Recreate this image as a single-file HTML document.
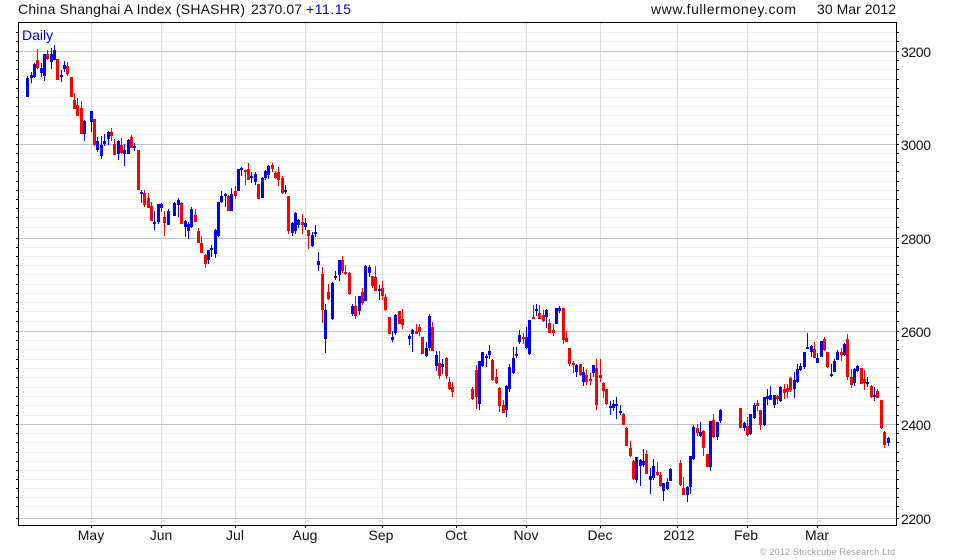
<!DOCTYPE html>
<html><head><meta charset="utf-8"><title>China Shanghai A Index</title>
<style>
html,body{margin:0;padding:0;background:#fff;width:980px;height:560px;overflow:hidden}
svg{display:block}
text{font-family:"Liberation Sans",Arial,sans-serif;font-size:14px;fill:#111}
</style></head><body>
<svg width="980" height="560" viewBox="0 0 980 560" xmlns="http://www.w3.org/2000/svg">
<rect width="980" height="560" fill="#fff"/>
<g shape-rendering="crispEdges" fill="none">
<path stroke="#f0f0f0" stroke-width="1" d="M19 32.5H896M19 41.5H896M19 60.5H896M19 69.5H896M19 79.5H896M19 88.5H896M19 97.5H896M19 106.5H896M19 115.5H896M19 125.5H896M19 134.5H896M19 153.5H896M19 162.5H896M19 171.5H896M19 181.5H896M19 190.5H896M19 199.5H896M19 208.5H896M19 217.5H896M19 227.5H896M19 247.5H896M19 256.5H896M19 265.5H896M19 274.5H896M19 284.5H896M19 293.5H896M19 302.5H896M19 311.5H896M19 321.5H896M19 340.5H896M19 349.5H896M19 359.5H896M19 368.5H896M19 377.5H896M19 387.5H896M19 396.5H896M19 405.5H896M19 415.5H896M19 433.5H896M19 442.5H896M19 452.5H896M19 461.5H896M19 470.5H896M19 479.5H896M19 488.5H896M19 497.5H896M19 506.5H896"/>
<path stroke="#dcdcdc" stroke-width="1" d="M91.5 23V525M161.5 23V525M235.5 23V525M305.5 23V525M382.5 23V525M456.5 23V525M526.5 23V525M600.5 23V525M677.5 23V525M747.5 23V525M817.5 23V525"/>
<path stroke="#bfbfbf" stroke-width="1" d="M19 51.5H896M19 144.5H896M19 238.5H896M19 331.5H896M19 424.5H896M19 518.5H896"/>
<path stroke="#000" stroke-width="1" d="M18.5 22V526M18 22.5H897M896.5 22V526M18 525.5H897"/>
<path stroke="#000" stroke-width="1" d="M16 32.5H18M16 41.5H18M16 51.5H18M16 60.5H18M16 69.5H18M16 79.5H18M16 88.5H18M16 97.5H18M16 106.5H18M16 115.5H18M16 125.5H18M16 134.5H18M16 144.5H18M16 153.5H18M16 162.5H18M16 171.5H18M16 181.5H18M16 190.5H18M16 199.5H18M16 208.5H18M16 217.5H18M16 227.5H18M16 238.5H18M16 247.5H18M16 256.5H18M16 265.5H18M16 274.5H18M16 284.5H18M16 293.5H18M16 302.5H18M16 311.5H18M16 321.5H18M16 331.5H18M16 340.5H18M16 349.5H18M16 359.5H18M16 368.5H18M16 377.5H18M16 387.5H18M16 396.5H18M16 405.5H18M16 415.5H18M16 424.5H18M16 433.5H18M16 442.5H18M16 452.5H18M16 461.5H18M16 470.5H18M16 479.5H18M16 488.5H18M16 497.5H18M16 506.5H18M16 518.5H18"/>
<path stroke="#000" stroke-width="1" d="M897 32.5H899M897 41.5H899M897 51.5H899M897 60.5H899M897 69.5H899M897 79.5H899M897 88.5H899M897 97.5H899M897 106.5H899M897 115.5H899M897 125.5H899M897 134.5H899M897 144.5H899M897 153.5H899M897 162.5H899M897 171.5H899M897 181.5H899M897 190.5H899M897 199.5H899M897 208.5H899M897 217.5H899M897 227.5H899M897 238.5H899M897 247.5H899M897 256.5H899M897 265.5H899M897 274.5H899M897 284.5H899M897 293.5H899M897 302.5H899M897 311.5H899M897 321.5H899M897 331.5H899M897 340.5H899M897 349.5H899M897 359.5H899M897 368.5H899M897 377.5H899M897 387.5H899M897 396.5H899M897 405.5H899M897 415.5H899M897 424.5H899M897 433.5H899M897 442.5H899M897 452.5H899M897 461.5H899M897 470.5H899M897 479.5H899M897 488.5H899M897 497.5H899M897 506.5H899M897 518.5H899"/>
<path stroke="#000" stroke-width="1" d="M91.5 526V528M161.5 526V528M235.5 526V528M305.5 526V528M382.5 526V528M456.5 526V528M526.5 526V528M600.5 526V528M677.5 526V528M747.5 526V528M817.5 526V528"/>
<!-- blue wicks -->
<path stroke="#0000ff" stroke-width="1" d="M27.5 76V97M31.5 72V83M34.5 63V78M41.5 63V77M44.5 54V81M51.5 48V69M54.5 45V60M61.5 70V82M64.5 61V72M84.5 120V141M91.5 111V132M97.5 137V152M101.5 136V159M104.5 134V146M108.5 131V145M118.5 140V160M124.5 144V166M128.5 139V154M134.5 143V151M141.5 190V203M154.5 211V230M158.5 204V224M161.5 203V212M168.5 209V225M174.5 202V216M178.5 198V217M185.5 220V237M188.5 222V239M191.5 207V228M208.5 250V264M211.5 245V257M215.5 229V258M218.5 202V237M221.5 191V203M225.5 193V207M231.5 188V211M238.5 169V191M241.5 167V176M251.5 172V183M255.5 172V185M262.5 177V198M265.5 170V180M268.5 165V179M285.5 185V194M292.5 222V236M295.5 212V234M298.5 219V228M305.5 218V230M312.5 232V247M315.5 225V237M318.5 252V271M325.5 304V353M332.5 282V320M335.5 271V280M339.5 260V281M352.5 304V316M359.5 296V315M365.5 265V301M369.5 265V277M379.5 285V300M392.5 331V342M395.5 314V335M409.5 334V345M412.5 329V352M426.5 342V357M429.5 314V351M436.5 351V371M442.5 359V374M479.5 361V410M482.5 352V367M486.5 354V367M489.5 345V359M506.5 385V417M509.5 364V392M513.5 347V374M516.5 347V358M519.5 330V344M526.5 327V349M529.5 320V355M536.5 304V316M546.5 309V328M556.5 308V324M559.5 306V313M576.5 364V377M583.5 367V386M593.5 365V377M610.5 401V415M613.5 400V411M616.5 397V419M620.5 405V415M636.5 457V483M640.5 459V486M643.5 449V467M650.5 468V494M653.5 459V480M663.5 483V501M667.5 478V490M670.5 468V481M687.5 486V502M690.5 456V494M693.5 425V460M700.5 422V437M710.5 421V471M717.5 422V440M720.5 409V423M744.5 422V431M750.5 414V435M754.5 403V419M764.5 397V426M767.5 389V405M770.5 386V400M774.5 395V408M780.5 386V402M794.5 372V398M797.5 364V383M800.5 363V371M804.5 352V369M807.5 333V349M811.5 345V357M817.5 353V363M821.5 341V357M831.5 364V377M834.5 359V372M837.5 350V360M844.5 343V356M854.5 368V386M857.5 365V372M867.5 377V387M874.5 387V401M888.5 437V446"/>
<!-- blue bodies -->
<path stroke="#0000ff" stroke-width="3" d="M27.5 78V97M31.5 75V78M34.5 64V77M41.5 68V73M44.5 54V76M51.5 54V62M54.5 50V60M61.5 75V77M64.5 65V69M84.5 121V134M91.5 111V122M97.5 141V150M101.5 145V156M104.5 141V144M108.5 132V139M118.5 141V154M124.5 150V154M128.5 140V154M134.5 146V148M141.5 192V194M154.5 222V224M158.5 204V222M161.5 204V208M168.5 211V225M174.5 203V216M178.5 200V205M185.5 221V227M188.5 224V231M191.5 209V227M208.5 250V260M211.5 248V250M215.5 230V254M218.5 202V236M221.5 196V202M225.5 194V196M231.5 194V211M238.5 169V191M241.5 168V170M251.5 176V178M255.5 174V182M262.5 178V198M265.5 171V178M268.5 166V175M285.5 190V192M292.5 223V233M295.5 213V231M298.5 220V225M305.5 223V227M312.5 235V246M315.5 232V234M318.5 261V265M325.5 310V339M332.5 283V319M335.5 276V278M339.5 260V275M352.5 306V314M359.5 296V311M365.5 266V301M369.5 267V273M379.5 289V291M392.5 337V340M395.5 315V333M409.5 336V339M412.5 330V334M426.5 348V356M429.5 316V348M436.5 355V366M442.5 364V367M479.5 361V404M482.5 352V366M486.5 356V358M489.5 351V355M506.5 386V410M509.5 367V389M513.5 358V373M516.5 354V356M519.5 335V342M526.5 337V348M529.5 320V354M536.5 309V311M546.5 310V317M556.5 308V324M559.5 308V311M576.5 365V372M583.5 372V382M593.5 365V373M610.5 406V408M613.5 404V408M616.5 404V406M620.5 411V413M636.5 457V480M640.5 460V466M643.5 461V465M650.5 476V480M653.5 466V478M663.5 483V491M667.5 482V489M670.5 469V481M687.5 487V495M690.5 456V487M693.5 427V459M700.5 432V436M710.5 421V467M717.5 422V437M720.5 410V421M744.5 423V428M750.5 414V434M754.5 405V418M764.5 397V425M767.5 396V399M770.5 395V400M774.5 395V405M780.5 387V401M794.5 380V389M797.5 369V382M800.5 366V370M804.5 352V367M807.5 347V349M811.5 346V352M817.5 358V363M821.5 341V357M831.5 374V376M834.5 361V372M837.5 352V360M844.5 344V355M854.5 369V383M857.5 366V371M867.5 382V384M874.5 395V397M888.5 438V443"/>
<!-- red wicks -->
<path stroke="#ff0000" stroke-width="1" d="M37.5 49V69M47.5 50V60M57.5 59V80M67.5 62V76M71.5 77V97M74.5 93V109M77.5 98V116M81.5 101V134M94.5 119V146M111.5 128V141M114.5 139V155M121.5 138V154M131.5 135V148M138.5 150V190M144.5 190V207M148.5 193V208M151.5 202V221M164.5 211V236M181.5 202V224M195.5 209V222M198.5 228V243M201.5 236V253M205.5 254V268M228.5 195V211M235.5 186V199M245.5 170V185M248.5 163V180M258.5 184V199M272.5 163V172M275.5 171V179M278.5 167V186M282.5 176V194M288.5 196V234M302.5 214V234M308.5 230V249M322.5 267V323M328.5 284V300M342.5 256V273M345.5 265V275M349.5 272V295M355.5 296V319M362.5 288V305M372.5 276V288M375.5 266V291M382.5 281V300M385.5 294V311M389.5 317V334M399.5 311V324M402.5 309V329M416.5 324V334M419.5 324V336M422.5 337V354M432.5 322V351M439.5 351V379M446.5 357V379M449.5 377V390M452.5 382V397M472.5 387V400M476.5 365V409M492.5 359V381M496.5 369V384M499.5 387V412M503.5 400V413M523.5 333V344M533.5 305V319M539.5 305V319M543.5 310V322M549.5 319V333M553.5 324V336M563.5 308V344M566.5 331V342M569.5 348V366M573.5 361V373M580.5 364V376M586.5 369V385M590.5 373V385M596.5 359V410M600.5 359V382M603.5 382V398M606.5 389V405M623.5 413V425M626.5 427V446M630.5 441V457M633.5 460V480M646.5 450V474M657.5 462V476M660.5 472V487M680.5 460V486M683.5 477V495M697.5 424V436M703.5 430V456M707.5 454V467M713.5 414V438M740.5 408V428M747.5 417V437M757.5 400V411M760.5 410V430M777.5 395V404M784.5 384V399M787.5 384V398M790.5 377V392M814.5 342V358M824.5 337V351M827.5 352V368M841.5 348V361M847.5 334V380M851.5 369V388M861.5 368V384M864.5 370V390M871.5 385V398M877.5 389V398M881.5 400V429M884.5 431V448"/>
<!-- red bodies -->
<path stroke="#ff0000" stroke-width="3" d="M37.5 60V68M47.5 54V59M57.5 59V80M67.5 66V74M71.5 77V97M74.5 100V109M77.5 105V116M81.5 108V134M94.5 119V145M111.5 132V136M114.5 144V155M121.5 145V153M131.5 137V148M138.5 150V190M144.5 193V205M148.5 198V208M151.5 206V221M164.5 217V223M181.5 203V224M195.5 215V222M198.5 231V243M201.5 243V253M205.5 255V264M228.5 196V211M235.5 191V196M245.5 170V172M248.5 169V180M258.5 184V199M272.5 165V169M275.5 173V178M278.5 172V180M282.5 178V193M288.5 196V231M302.5 222V225M308.5 230V236M322.5 274V310M328.5 292V299M342.5 260V271M345.5 272V274M349.5 273V294M355.5 306V316M362.5 292V303M372.5 276V286M375.5 277V291M382.5 288V296M385.5 297V310M389.5 317V334M399.5 311V324M402.5 319V325M416.5 331V334M419.5 327V332M422.5 337V354M432.5 327V351M439.5 363V376M446.5 358V376M449.5 382V389M452.5 387V392M472.5 389V399M476.5 370V397M492.5 360V380M496.5 377V383M499.5 388V406M503.5 405V413M523.5 337V339M533.5 317V319M539.5 313V319M543.5 315V321M549.5 323V333M553.5 330V333M563.5 308V340M566.5 338V342M569.5 348V364M573.5 363V365M580.5 364V375M586.5 375V382M590.5 379V381M596.5 368V405M600.5 375V378M603.5 383V391M606.5 389V404M623.5 414V425M626.5 428V446M630.5 448V456M633.5 461V479M646.5 454V474M657.5 472V475M660.5 475V486M680.5 463V485M683.5 488V495M697.5 428V433M703.5 431V448M707.5 454V467M713.5 420V437M740.5 408V428M747.5 426V435M757.5 403V406M760.5 410V425M777.5 396V399M784.5 389V393M787.5 388V392M790.5 378V390M814.5 349V358M824.5 339V350M827.5 352V367M841.5 352V355M847.5 339V377M851.5 377V385M861.5 368V384M864.5 379V383M871.5 386V397M877.5 391V398M881.5 400V428M884.5 432V445"/>
</g>
<text x="18" y="14" textLength="227">China Shanghai A Index (SHASHR)</text>
<text x="251" y="14" textLength="51">2370.07</text>
<text x="306" y="14" textLength="45" style="fill:#0000cc">+11.15</text>
<text x="651" y="14" textLength="145">www.fullermoney.com</text>
<text x="817" y="14" textLength="79">30 Mar 2012</text>
<text x="22" y="40" style="fill:#0000cc">Daily</text>
<text x="901" y="57" textLength="30">3200</text>
<text x="901" y="150" textLength="30">3000</text>
<text x="901" y="244" textLength="30">2800</text>
<text x="901" y="337" textLength="30">2600</text>
<text x="901" y="430" textLength="30">2400</text>
<text x="901" y="524" textLength="30">2200</text>
<g text-anchor="middle">
<text x="91" y="540">May</text>
<text x="161" y="540">Jun</text>
<text x="235" y="540">Jul</text>
<text x="305" y="540">Aug</text>
<text x="381" y="540">Sep</text>
<text x="456" y="540">Oct</text>
<text x="526" y="540">Nov</text>
<text x="600" y="540">Dec</text>
<text x="679" y="540">2012</text>
<text x="746" y="540">Feb</text>
<text x="817" y="540">Mar</text>
</g>
<text x="760" y="555" textLength="135" style="font-size:9px;fill:#a0a0a0">© 2012 Stockcube Research Ltd</text>
</svg>
</body></html>
